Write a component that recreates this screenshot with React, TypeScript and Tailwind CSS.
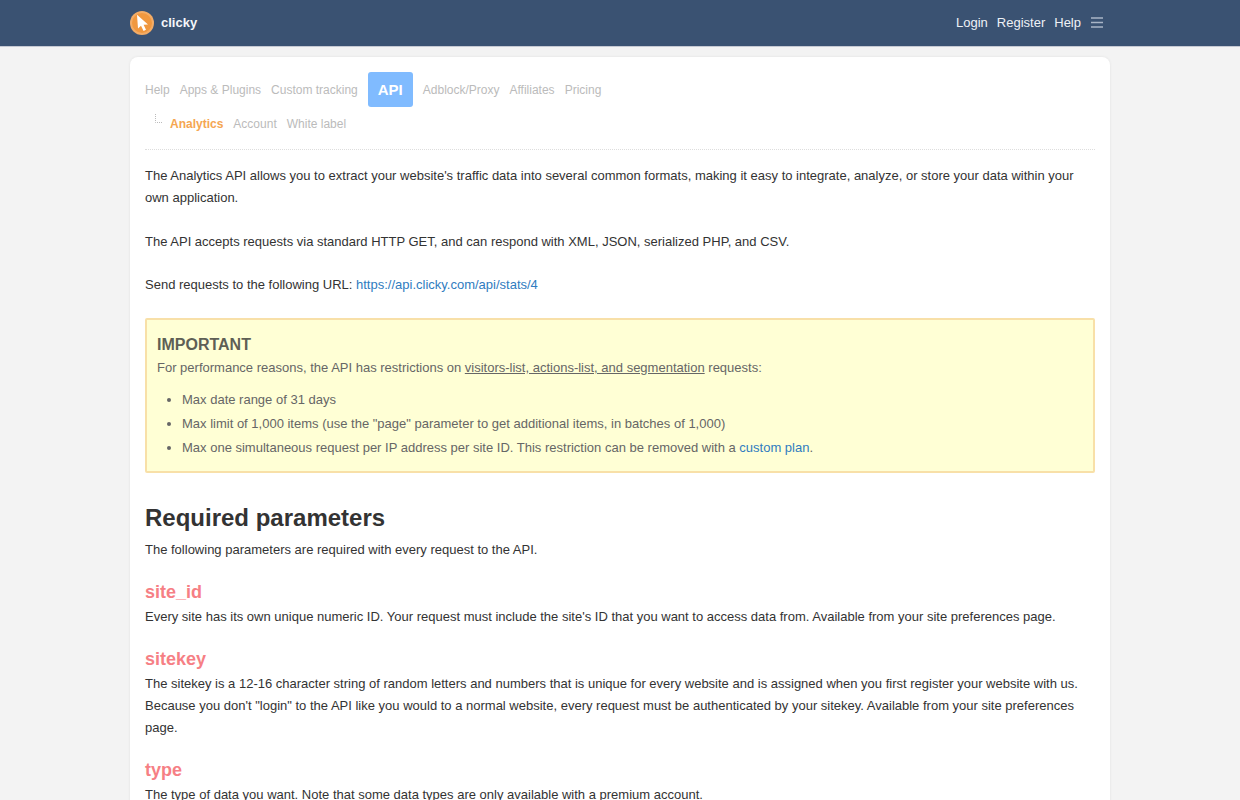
export default function App() {
  const nav = "text-[#bbbbbb]";
  return (
    <div className="h-[800px] overflow-hidden bg-[#f3f3f3] font-['Liberation_Sans',Arial,sans-serif] text-[13px] leading-[22px] text-[#333333] antialiased">
      <header className="h-[47px] bg-[#3a5272] border-b border-[#c5c9d3]">
        <div className="mx-auto flex h-[45px] w-[980px] items-center justify-between pr-[7px]">
          <div className="flex items-center gap-[7px]">
            <svg width="24" height="24" viewBox="0 0 24 24">
              <circle cx="12" cy="12" r="12" fill="#f3ac66" />
              <circle cx="12" cy="12" r="10" fill="#f0983f" />
              <path d="M7 3.8 L8 17.5 L11 14.8 L13.6 20 L16 18.8 L13.6 13.8 L18 13.6 Z" fill="#ffffff" />
            </svg>
            <span className="text-[13px] font-bold text-[#f4f6f9]">clicky</span>
          </div>
          <div className="flex items-center text-[13px] text-[#eef1f6]">
            <span>Login</span>
            <span className="ml-[9px]">Register</span>
            <span className="ml-[9px]">Help</span>
            <svg className="ml-[10px] mb-[1px]" width="12" height="11" viewBox="0 0 12 11">
              <path d="M0 1 H12 M0 5.5 H12 M0 10 H12" stroke="#a9b5c6" strokeWidth="1.5" />
            </svg>
          </div>
        </div>
      </header>

      <main className="mx-auto mt-[10px] w-[980px] rounded-[8px] bg-white px-[15px] pt-[15px] pb-[40px] shadow-[0_0_3px_rgba(0,0,0,0.08)]">
        <nav className={`flex items-center gap-[10px] text-[12px] ${nav}`}>
          <span>Help</span>
          <span>Apps &amp; Plugins</span>
          <span>Custom tracking</span>
          <span className="flex h-[35px] w-[45px] items-center justify-center rounded-[3px] bg-[#80bbff] text-[15px] font-bold text-white">API</span>
          <span>Adblock/Proxy</span>
          <span>Affiliates</span>
          <span>Pricing</span>
        </nav>
        <nav className={`mt-[5px] flex h-[23px] items-center gap-[10px] pl-[10px] text-[12px] ${nav}`}>
          <svg className="-mr-[10px] -mt-[8px]" width="15" height="12" viewBox="0 0 15 12">
            <path d="M0.5 0 V8.5 H8" fill="none" stroke="#bbbbbb" strokeDasharray="1 1" />
          </svg>
          <span className="font-bold text-[#f5a652]">Analytics</span>
          <span>Account</span>
          <span>White label</span>
        </nav>

        <div className="mt-[14px] border-t border-dotted border-[#dddddd] pt-[4px]">
          <p className="mt-[11px]">The Analytics API allows you to extract your website's traffic data into several common formats, making it easy to integrate, analyze, or store your data within your own application.</p>
          <p className="mt-[22px]">The API accepts requests via standard HTTP GET, and can respond with XML, JSON, serialized PHP, and CSV.</p>
          <p className="mt-[21px]">Send requests to the following URL: <a className="text-[#2f7cc0]">https://api.clicky.com/api/stats/4</a></p>
        </div>

        <section className="mt-[22px] h-[155px] rounded-[2px] border-2 border-[#f8e0a8] bg-[#ffffd5] px-[10px] pt-[12px] text-[#666666]">
          <h3 className="text-[16px] font-bold leading-[25px] text-[#5f5f55]">IMPORTANT</h3>
          <p className="leading-[22px]">For performance reasons, the API has restrictions on <span className="underline">visitors-list, actions-list, and segmentation</span> requests:</p>
          <ul className="mt-[9px] list-disc pl-[25px] leading-[24px]">
            <li>Max date range of 31 days</li>
            <li>Max limit of 1,000 items (use the "page" parameter to get additional items, in batches of 1,000)</li>
            <li>Max one simultaneous request per IP address per site ID. This restriction can be removed with a <a className="text-[#2f7cc0]">custom plan</a>.</li>
          </ul>
        </section>

        <h2 className="mt-[27px] text-[24px] font-bold leading-[36px] text-[#333333]">Required parameters</h2>
        <p className="mt-[3px]">The following parameters are required with every request to the API.</p>

        <h4 className="mt-[19px] pb-[1px] text-[18px] font-bold leading-[25px] text-[#f67f85]">site_id</h4>
        <p>Every site has its own unique numeric ID. Your request must include the site's ID that you want to access data from. Available from your site preferences page.</p>

        <h4 className="mt-[19px] pb-[1px] text-[18px] font-bold leading-[25px] text-[#f67f85]">sitekey</h4>
        <p>The sitekey is a 12-16 character string of random letters and numbers that is unique for every website and is assigned when you first register your website with us. Because you don't "login" to the API like you would to a normal website, every request must be authenticated by your sitekey. Available from your site preferences page.</p>

        <h4 className="mt-[19px] pb-[1px] text-[18px] font-bold leading-[25px] text-[#f67f85]">type</h4>
        <p>The type of data you want. Note that some data types are only available with a premium account.</p>
      </main>
    </div>
  );
}
